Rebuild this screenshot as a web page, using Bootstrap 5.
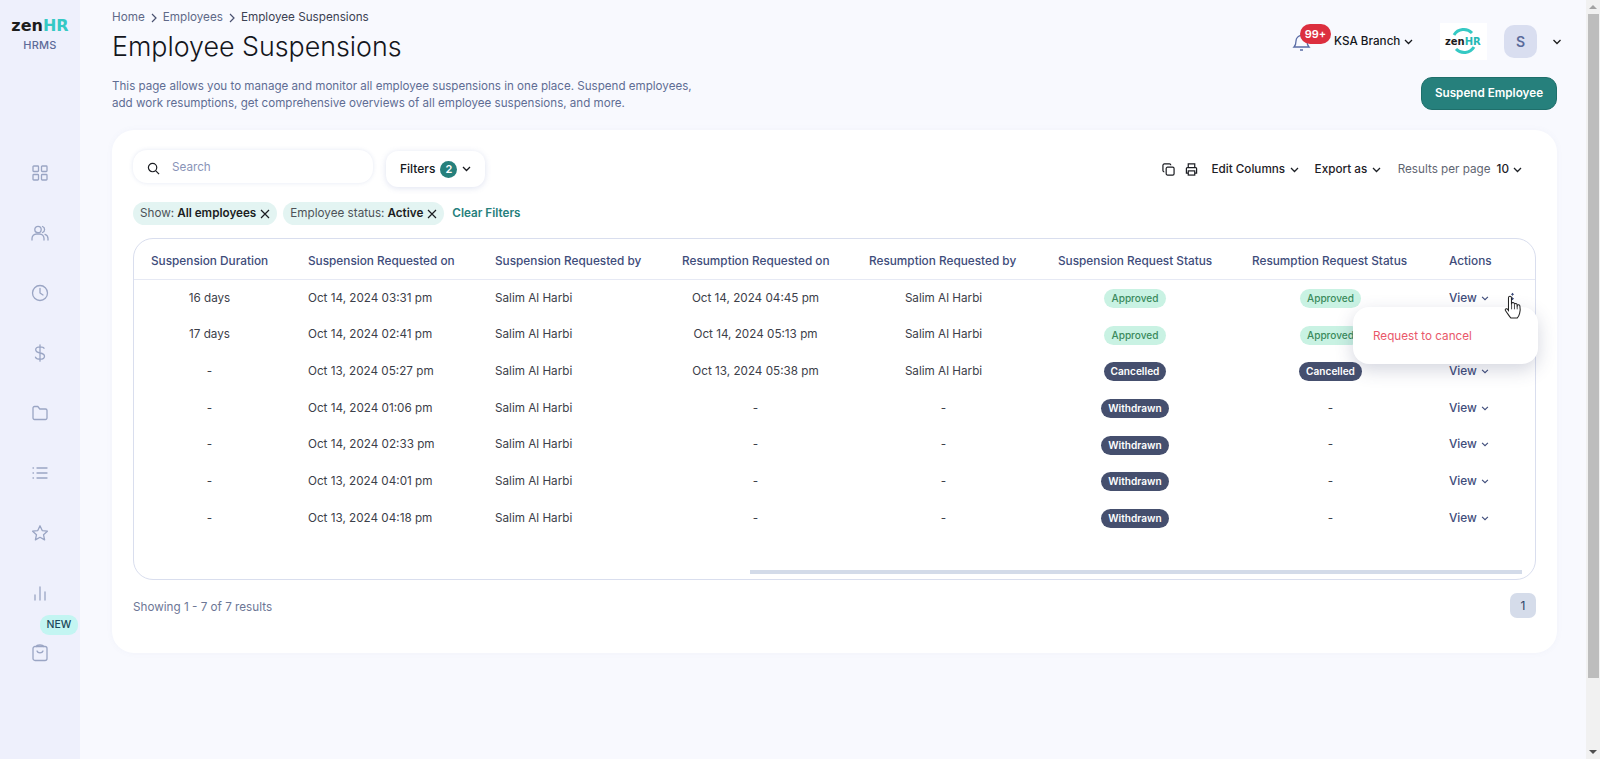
<!DOCTYPE html>
<html lang="en">
<head>
<meta charset="utf-8">
<title>Employee Suspensions</title>
<link href="https://cdn.jsdelivr.net/npm/bootstrap@5.3.0/dist/css/bootstrap.min.css" rel="stylesheet">
<style>
html,body{height:100%;overflow:hidden}
body{font-family:"Inter","Liberation Sans",sans-serif;background:#f8f9fe;color:#2b2f3a;font-size:11.7px}
.app-shell{height:759px}
.side-rail{width:80px;flex:none;background:#eef0fc;padding-top:17px}
.brand-word{font-family:"DejaVu Sans","Liberation Sans",sans-serif;font-weight:700;font-size:16px;line-height:18px;color:#1d1d1d}
.brand-word span{color:#35c9c4}
.brand-sub{font-size:11px;font-weight:500;color:#5d6b99;line-height:14px;margin-top:3px;letter-spacing:.2px}
.rail-nav{margin-top:91px}
.rail-item{height:60px;position:relative}
.rail-item svg{width:18px;height:18px;fill:none;stroke:#9aa5c4;stroke-width:1.3;stroke-linecap:round;stroke-linejoin:round}
.new-tag{position:absolute;left:40px;top:-8px;width:38px;height:20px;border-radius:9px;background:#c3f5f2;color:#1e4a5c;font-size:10.5px;font-weight:500;line-height:20px;text-align:center}
.main-pane{flex:1;min-width:0;padding:8px 29px 0 32px}
.crumbs{font-size:11.7px;line-height:17px;color:#5f6988;padding-top:1px}
.crumbs svg{width:8px;height:10px;margin:0 5px;fill:none;stroke:#4a5270;stroke-width:1.2}
.crumbs b{font-weight:400;color:#3c4253}
.page-title{font-size:26.8px;font-weight:300;line-height:36px;color:#14161c;margin:2px 0 14px}
.page-desc{font-size:11.6px;line-height:17px;color:#5f6d94;width:600px;margin:0}
.top-right{padding-top:15px}
.bell-wrap{position:relative;width:34px;height:37px}
.bell-wrap svg{position:absolute;left:0;top:9px;width:19px;height:20px;fill:none;stroke:#5a6ca5;stroke-width:1.3}
.count-tag{position:absolute;left:8px;top:1px;width:31px;height:20px;border-radius:10px;background:#dc2f3f;color:#fff;font-size:11px;font-weight:600;line-height:20px;text-align:center}
.branch-pick{font-size:11.7px;font-weight:500;color:#15171c;margin-left:8px;width:106px;padding-top:1px}
.mini-chev{width:9px;height:6px;flex:none;fill:none;stroke:currentColor;stroke-width:1.3}
.logo-tile{width:47px;height:37px;background:#fff;position:relative}
.logo-tile svg{position:absolute;left:11px;top:5px;width:26px;height:26px;fill:none;stroke:#35c9c4;stroke-width:3}
.logo-tile span{position:absolute;left:5px;top:12px;font-family:"DejaVu Sans","Liberation Sans",sans-serif;font-weight:700;font-size:10px;line-height:14px;color:#1d1d1d}
.logo-tile span i{font-style:normal;color:#26b8b4}
.user-tile{width:33px;height:33px;border-radius:10px;background:#d9def0;color:#5a6a9a;font-weight:600;font-size:14px;margin-left:17px}
.user-chev{margin:0 -5px 0 15px;color:#1d1d1d;width:10px}
.act-btn{--bs-btn-bg:#26807c;--bs-btn-color:#fff;--bs-btn-border-color:#1f6f6b;--bs-btn-hover-bg:#26807c;--bs-btn-hover-color:#fff;width:136px;height:33px;padding:1px 0 0;border-radius:11px;font-size:11.7px;font-weight:600;margin-top:17px}
.sheet{margin-top:18px;height:523px;border:0;border-radius:22px;background:#fff;box-shadow:0 0 6px rgba(90,110,180,.05);padding:20px 21px 0}
.seek-box{width:240px;height:33px;border-radius:14px;box-shadow:0 0 4px rgba(90,110,180,.16);padding:3px 0 0 14px;color:#8a94b8}
.seek-box svg,.tool-ico{fill:none;stroke:#1b1d22;stroke-width:1.3}
.seek-box svg{width:13px;height:13px;margin-right:12px}
.seek-box span{font-size:11.7px}
.filter-btn{width:99px;height:36px;margin:1px 0 0 13px;border-radius:12px;box-shadow:0 1px 6px rgba(90,110,180,.2);color:#15171c;font-weight:500;font-size:12px;padding-left:14px}
.num-dot{width:17px;height:17px;border-radius:50%;background:#26807c;color:#fff;font-size:11px;font-weight:600;margin:0 5px}
.tool-row{margin:11px 14px 0 0;color:#1d2026;font-weight:500;font-size:11.7px}
.tool-ico{width:13px;height:13px}
.tool-print{margin-left:10px}
.tool-gap{gap:5px}
.tool-edit{margin-left:13px}
.tool-export{margin-left:15.5px}
.tool-muted{color:#5f6672;font-weight:400;margin-left:16.5px}
.tool-count{margin-left:6px;gap:4px}
.chip-row{margin-top:15px;height:23px}
.chip-pill{height:23px;border-radius:12px;background:#e3f4f2;padding:1px 7px 0;color:#4d5358;white-space:nowrap}
.chip-pill b{font-weight:600;color:#1b1d22;margin-left:3px}
.chip-pill svg{width:10px;height:10px;fill:none;stroke:#1b1d22;stroke-width:1.2;margin-left:4px}
.chip-next{margin-left:6px}
.clear-link{color:#26807c;font-weight:600;text-decoration:none;padding-top:1px}
.grid-box{margin-top:13px;height:342px;border:1px solid #d9deee;border-radius:20px;position:relative}
.susp-table{table-layout:fixed;width:1401px;margin:0;--bs-table-bg:transparent}
.susp-table th{height:40px;padding:7px 0 0 17px;font-weight:500;font-size:11.8px;color:#3e4c7a;white-space:nowrap;vertical-align:middle;border-bottom:1px solid #e6e9f4}
.susp-table td{height:36.7px;padding:2px 0 0 17px;font-size:11.7px;color:#3c4049;white-space:nowrap;vertical-align:middle;border:0}
.susp-table .mid{padding:2px 6px 0 0;text-align:center}
.susp-table th:nth-child(1){width:157px}
.susp-table th:nth-child(2){width:187px}
.susp-table th:nth-child(3){width:187px}
.susp-table th:nth-child(4){width:187px}
.susp-table th:nth-child(5){width:189px}
.susp-table th:nth-child(6){width:194px}
.susp-table th:nth-child(7){width:197px}
.state-tag{display:inline-block;height:19px;line-height:19px;border-radius:10px;padding:0 7px;font-size:10.1px;font-weight:500}
.state-ok{background:#c9f2e3;color:#3a8a5c}
.state-off{background:#454f6e;color:#fff;font-weight:600}
.view-link{color:#3e4c7a;font-weight:500;font-size:11.8px}
.view-link svg{margin-left:4px;width:8px;height:5px;vertical-align:1px}
.dots-mark{position:absolute;left:1377px;top:53px;width:3px;height:13px;background:radial-gradient(circle,#3e4c7a 1px,transparent 1.3px) 0 0/3px 4.5px}
.hand-cur{position:absolute;left:1367px;top:55px;width:23px;height:26px;z-index:5}
.x-bar{position:absolute;left:616px;top:331px;width:772px;height:4px;background:#d3dbe9}
.menu-pop{display:block;left:1219px;top:68px;width:185px;height:57px;border:0;border-radius:16px;box-shadow:0 6px 18px rgba(60,70,110,.22);padding:0;min-width:0;z-index:4}
.menu-pop .dropdown-item{color:#e9586a;font-size:11.7px;padding:0 0 0 20px;line-height:58px;background:none}
.foot-row{margin-top:13px;color:#6d7796}
.foot-row>span:first-child{padding-top:4px}
.page-one{width:26px;height:25px;border-radius:7px;background:#d5dcea;color:#2f4468;font-size:12px}
.win-scroll{width:14px;flex:none;background:#f1f1f1}
.win-scroll i{display:block;height:14px;position:relative}
.win-scroll i:first-child:after,.win-scroll i:last-child:after{content:"";position:absolute;left:3px;border-left:4px solid transparent;border-right:4px solid transparent}
.win-scroll i:first-child:after{top:5px;border-bottom:4px solid #a3a3a3}
.win-scroll i:last-child:after{top:5px;border-top:4px solid #505050}
.win-thumb{height:664px;background:#bdbdbd;margin:0 1px 0 2px}
</style>
</head>
<body>
<div class="app-shell d-flex">
  <aside class="side-rail d-flex flex-column text-center">
    <div class="brand-word">zen<span>HR</span></div>
    <div class="brand-sub">HRMS</div>
    <div class="rail-nav">
      <div class="rail-item d-flex align-items-center justify-content-center"><svg viewBox="0 0 18 18"><rect x="2" y="2" width="5.5" height="5.5" rx=".8"/><rect x="10.5" y="2" width="5.5" height="5.5" rx=".8"/><rect x="2" y="10.5" width="5.5" height="5.5" rx=".8"/><rect x="10.5" y="10.5" width="5.5" height="5.5" rx=".8"/></svg></div>
      <div class="rail-item d-flex align-items-center justify-content-center"><svg viewBox="0 0 18 18"><circle cx="7" cy="5.5" r="3.2"/><path d="M1 16v-1.5A4.5 4.5 0 0 1 5.500 10h3a4.500 4.500 0 0 1 4.500 4.500V16"/><path d="M11.500 2.500a3.200 3.200 0 0 1 0 6M14 10.300a4.500 4.500 0 0 1 3 4.200V16"/></svg></div>
      <div class="rail-item d-flex align-items-center justify-content-center"><svg viewBox="0 0 18 18"><circle cx="9" cy="9" r="7.500"/><path d="M9 4.500V9l3 2"/></svg></div>
      <div class="rail-item d-flex align-items-center justify-content-center"><svg viewBox="0 0 18 18"><path d="M9 .8v16.400M13 4.300C12.500 3 11 2.800 9 2.800c-2.500 0-4.300 1-4.300 3s1.800 2.700 4.300 3.200 4.500 1.200 4.500 3.200-2 3-4.500 3c-2.200 0-4-.5-4.500-2"/></svg></div>
      <div class="rail-item d-flex align-items-center justify-content-center"><svg viewBox="0 0 18 18"><path d="M2 4a1.500 1.500 0 0 1 1.500-1.500h3.300l2 2.500h5.700A1.500 1.500 0 0 1 16 6.500V14a1.500 1.500 0 0 1-1.500 1.500h-11A1.500 1.500 0 0 1 2 14z"/></svg></div>
      <div class="rail-item d-flex align-items-center justify-content-center"><svg viewBox="0 0 18 18"><path d="M6 4h10M6 9h10M6 14h10M2 4h.5M2 9h.5M2 14h.5"/></svg></div>
      <div class="rail-item d-flex align-items-center justify-content-center"><svg viewBox="0 0 18 18"><path d="M9 1.800l2.200 4.800 5.200.6-3.900 3.500 1.100 5.200L9 13.300l-4.600 2.600 1.100-5.200L1.600 7.200l5.200-.6z"/></svg></div>
      <div class="rail-item d-flex align-items-center justify-content-center"><svg viewBox="0 0 18 18"><path d="M4 16v-5M9 16V3M14 16V8"/></svg></div>
      <div class="rail-item d-flex align-items-center justify-content-center"><span class="new-tag">NEW</span><svg viewBox="0 0 18 18"><rect x="2" y="2.500" width="14" height="14" rx="2"/><path d="M5.500 2.500a3.500 1.500 0 0 1 7 0M6 7c.8 2.400 5.200 2.400 6 0"/></svg></div>
    </div>
  </aside>

  <main class="main-pane">
    <header class="d-flex justify-content-between">
      <div>
        <nav class="crumbs" aria-label="breadcrumb">Home<svg viewBox="0 0 8 10"><path d="M2 1l4 4-4 4"/></svg>Employees<svg viewBox="0 0 8 10"><path d="M2 1l4 4-4 4"/></svg><b>Employee Suspensions</b></nav>
        <h1 class="page-title">Employee Suspensions</h1>
        <p class="page-desc">This page allows you to manage and monitor all employee suspensions in one place. Suspend employees, add work resumptions, get comprehensive overviews of all employee suspensions, and more.</p>
      </div>
      <div class="d-flex flex-column align-items-end top-right">
        <div class="d-flex align-items-center">
          <div class="bell-wrap"><svg viewBox="0 0 19 20"><path d="M2 15c1.500-1.500 2-3 2-6a5.500 5.500 0 0 1 11 0c0 3 .5 4.500 2 6zM8 18h3"/></svg><span class="count-tag">99+</span></div>
          <div class="branch-pick d-flex align-items-center gap-1">KSA Branch <svg class="mini-chev" viewBox="0 0 9 6"><path d="M1 1l3.500 3.500L8 1"/></svg></div>
          <div class="logo-tile"><svg viewBox="0 0 26 26"><path d="M3 7A11.500 11.500 0 0 1 21 5M23 19A11.500 11.500 0 0 1 5 21"/></svg><span>zen<i>HR</i></span></div>
          <div class="user-tile d-flex align-items-center justify-content-center">S</div>
          <svg class="mini-chev user-chev" viewBox="0 0 9 6"><path d="M1 1l3.500 3.500L8 1"/></svg>
        </div>
        <button class="btn act-btn" type="button">Suspend Employee</button>
      </div>
    </header>

    <section class="card sheet">
      <div class="d-flex justify-content-between align-items-start">
        <div class="d-flex align-items-start">
          <div class="seek-box d-flex align-items-center"><svg viewBox="0 0 14 14"><circle cx="6" cy="6" r="4.500"/><path d="M9.500 9.500L13 13"/></svg><span>Search</span></div>
          <div class="filter-btn d-flex align-items-center">Filters<span class="num-dot d-flex align-items-center justify-content-center">2</span><svg class="mini-chev" viewBox="0 0 9 6"><path d="M1 1l3.500 3.500L8 1"/></svg></div>
        </div>
        <div class="tool-row d-flex align-items-center">
          <svg class="tool-ico" viewBox="0 0 14 14"><rect x="4.500" y="4.500" width="8.500" height="8.500" rx="1.500"/><path d="M2.500 9.500A1.500 1.500 0 0 1 1 8V2.500A1.500 1.500 0 0 1 2.500 1H8a1.500 1.500 0 0 1 1.500 1.500"/></svg>
          <svg class="tool-ico tool-print" viewBox="0 0 14 14"><path d="M3.500 5V1h7v4M3.500 11H1.500V6a1 1 0 0 1 1-1h9a1 1 0 0 1 1 1v5h-2"/><rect x="3.500" y="8.500" width="7" height="4.500"/></svg>
          <span class="tool-gap tool-edit d-flex align-items-center">Edit Columns <svg class="mini-chev" viewBox="0 0 9 6"><path d="M1 1l3.500 3.500L8 1"/></svg></span>
          <span class="tool-gap tool-export d-flex align-items-center">Export as <svg class="mini-chev" viewBox="0 0 9 6"><path d="M1 1l3.500 3.500L8 1"/></svg></span>
          <span class="tool-muted">Results per page</span>
          <span class="tool-count d-flex align-items-center">10 <svg class="mini-chev" viewBox="0 0 9 6"><path d="M1 1l3.500 3.500L8 1"/></svg></span>
        </div>
      </div>

      <div class="chip-row d-flex align-items-center">
        <span class="chip-pill d-flex align-items-center">Show:<b>All employees</b><svg viewBox="0 0 10 10"><path d="M1 1l8 8M9 1l-8 8"/></svg></span>
        <span class="chip-pill chip-next d-flex align-items-center">Employee status:<b>Active</b><svg viewBox="0 0 10 10"><path d="M1 1l8 8M9 1l-8 8"/></svg></span>
        <a class="clear-link ms-2" href="#">Clear Filters</a>
      </div>

      <div class="grid-box">
        <table class="table susp-table">
          <thead>
            <tr>
              <th>Suspension Duration</th><th>Suspension Requested on</th><th>Suspension Requested by</th><th>Resumption Requested on</th><th>Resumption Requested by</th><th>Suspension Request Status</th><th>Resumption Request Status</th><th>Actions</th>
            </tr>
          </thead>
          <tbody>
            <tr><td class="mid">16 days</td><td>Oct 14, 2024 03:31 pm</td><td>Salim Al Harbi</td><td class="mid">Oct 14, 2024 04:45 pm</td><td class="mid">Salim Al Harbi</td><td class="mid"><span class="state-tag state-ok">Approved</span></td><td class="mid"><span class="state-tag state-ok">Approved</span></td><td><span class="view-link">View<svg class="mini-chev" viewBox="0 0 9 6"><path d="M1 1l3.500 3.500L8 1"/></svg></span></td></tr>
            <tr><td class="mid">17 days</td><td>Oct 14, 2024 02:41 pm</td><td>Salim Al Harbi</td><td class="mid">Oct 14, 2024 05:13 pm</td><td class="mid">Salim Al Harbi</td><td class="mid"><span class="state-tag state-ok">Approved</span></td><td class="mid"><span class="state-tag state-ok">Approved</span></td><td><span class="view-link">View<svg class="mini-chev" viewBox="0 0 9 6"><path d="M1 1l3.500 3.500L8 1"/></svg></span></td></tr>
            <tr><td class="mid">-</td><td>Oct 13, 2024 05:27 pm</td><td>Salim Al Harbi</td><td class="mid">Oct 13, 2024 05:38 pm</td><td class="mid">Salim Al Harbi</td><td class="mid"><span class="state-tag state-off">Cancelled</span></td><td class="mid"><span class="state-tag state-off">Cancelled</span></td><td><span class="view-link">View<svg class="mini-chev" viewBox="0 0 9 6"><path d="M1 1l3.500 3.500L8 1"/></svg></span></td></tr>
            <tr><td class="mid">-</td><td>Oct 14, 2024 01:06 pm</td><td>Salim Al Harbi</td><td class="mid">-</td><td class="mid">-</td><td class="mid"><span class="state-tag state-off">Withdrawn</span></td><td class="mid">-</td><td><span class="view-link">View<svg class="mini-chev" viewBox="0 0 9 6"><path d="M1 1l3.500 3.500L8 1"/></svg></span></td></tr>
            <tr><td class="mid">-</td><td>Oct 14, 2024 02:33 pm</td><td>Salim Al Harbi</td><td class="mid">-</td><td class="mid">-</td><td class="mid"><span class="state-tag state-off">Withdrawn</span></td><td class="mid">-</td><td><span class="view-link">View<svg class="mini-chev" viewBox="0 0 9 6"><path d="M1 1l3.500 3.500L8 1"/></svg></span></td></tr>
            <tr><td class="mid">-</td><td>Oct 13, 2024 04:01 pm</td><td>Salim Al Harbi</td><td class="mid">-</td><td class="mid">-</td><td class="mid"><span class="state-tag state-off">Withdrawn</span></td><td class="mid">-</td><td><span class="view-link">View<svg class="mini-chev" viewBox="0 0 9 6"><path d="M1 1l3.500 3.500L8 1"/></svg></span></td></tr>
            <tr><td class="mid">-</td><td>Oct 13, 2024 04:18 pm</td><td>Salim Al Harbi</td><td class="mid">-</td><td class="mid">-</td><td class="mid"><span class="state-tag state-off">Withdrawn</span></td><td class="mid">-</td><td><span class="view-link">View<svg class="mini-chev" viewBox="0 0 9 6"><path d="M1 1l3.500 3.500L8 1"/></svg></span></td></tr>
          </tbody>
        </table>
        <span class="dots-mark"></span>
        <div class="dropdown-menu menu-pop"><a class="dropdown-item" href="#">Request to cancel</a></div>
        <svg class="hand-cur" viewBox="0 0 20 22"><path d="M6.500 3a1.300 1.300 0 0 1 2.600 0v6l.2-1.200a1.200 1.200 0 0 1 2.300.2l.1.800a1.200 1.200 0 0 1 2.300.2l.1.800a1.200 1.200 0 0 1 2.300.3c.4 2 .3 4.500-.2 6.500-.4 1.600-1.200 3.100-2 3.900H8.500c-1-1-2.400-3.300-4.500-6.200-.8-1.100 0-2.100 1-1.800.6.200 1 .7 1.500 1.400z" fill="#fff" stroke="#222" stroke-width=".9"/><path d="M9.200 9v4M11.700 9v4M14.100 9.500v3.500" fill="none" stroke="#222" stroke-width=".7"/></svg>
        <div class="x-bar"></div>
      </div>

      <div class="foot-row d-flex justify-content-between align-items-center">
        <span>Showing 1 - 7 of 7 results</span>
        <span class="page-one d-flex align-items-center justify-content-center">1</span>
      </div>
    </section>
  </main>

  <div class="win-scroll d-flex flex-column">
    <i></i>
    <div class="win-thumb"></div>
    <div class="flex-grow-1"></div>
    <i></i>
  </div>
</div>
<script src="https://cdn.jsdelivr.net/npm/bootstrap@5.3.0/dist/js/bootstrap.bundle.min.js"></script>
</body>
</html>
